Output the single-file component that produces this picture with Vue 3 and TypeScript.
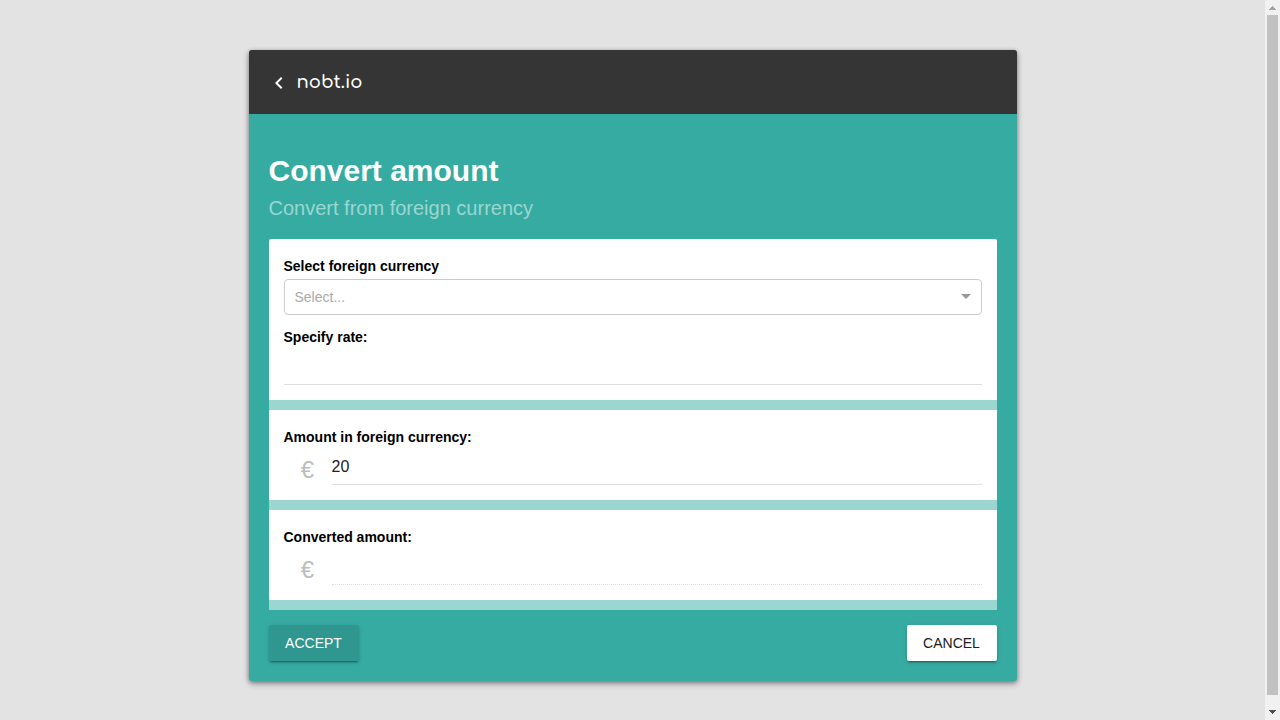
<script setup lang="ts">
import { ref } from 'vue'

const currencies: string[] = ['CHF', 'GBP', 'JPY', 'USD']
const currency = ref('')
const rate = ref('')
const amount = ref('20')
const converted = ref('')
</script>

<template>
  <div class="window">
    <div class="viewport">
      <main class="panel">
        <header class="bar">
          <button class="back" type="button" aria-label="Back">
            <svg width="24" height="24" viewBox="0 0 24 24" aria-hidden="true">
              <path d="M15.41 7.41L14 6l-6 6 6 6 1.41-1.41L10.83 12z" fill="currentColor" />
            </svg>
          </button>
          <a class="brand" href="#">nobt.io</a>
        </header>

        <form class="content" @submit.prevent>
          <h1 class="title">Convert amount</h1>
          <p class="subtitle">Convert from foreign currency</p>

          <div class="sections">
            <section class="section">
              <label class="label" for="currency">Select foreign currency</label>
              <div class="select-wrap">
                <select id="currency" v-model="currency" class="select" :class="{ empty: !currency }">
                  <option value="">Select...</option>
                  <option v-for="c in currencies" :key="c" :value="c">{{ c }}</option>
                </select>
                <span class="caret"></span>
              </div>
              <label class="label spaced" for="rate">Specify rate:</label>
              <input id="rate" v-model="rate" class="input" type="text" />
            </section>

            <section class="section">
              <label class="label" for="amount">Amount in foreign currency:</label>
              <div class="row">
                <span class="symbol">€</span>
                <input id="amount" v-model="amount" class="input" type="text" />
              </div>
            </section>

            <section class="section">
              <label class="label" for="converted">Converted amount:</label>
              <div class="row">
                <span class="symbol">€</span>
                <input id="converted" v-model="converted" class="input" type="text" disabled />
              </div>
            </section>
          </div>

          <div class="actions">
            <button class="button accept" type="submit">ACCEPT</button>
            <button class="button cancel" type="button">CANCEL</button>
          </div>
        </form>
      </main>
    </div>

    <div class="scrollbar" aria-hidden="true">
      <svg class="arrow" width="15" height="15" viewBox="0 0 15 15" shape-rendering="crispEdges">
        <path d="M7 6h1v1h1v1h1v1h1v1H4V9h1V8h1V7h1z" fill="#a3a3a3" />
      </svg>
      <div class="track">
        <div class="thumb"></div>
      </div>
      <svg class="arrow" width="15" height="15" viewBox="0 0 15 15" shape-rendering="crispEdges">
        <path d="M4 5h7v1h-1v1H9v1H8v1H7V8H6V7H5V6H4z" fill="#505050" />
      </svg>
    </div>
  </div>
</template>

<style>
body {
  background: #e3e3e3;
}
</style>

<style scoped>
.window {
  display: flex;
  height: 100vh;
}

.viewport {
  flex: 1;
  min-width: 0;
  overflow-y: auto;
  scrollbar-width: none;
}

.scrollbar {
  display: flex;
  flex-direction: column;
  width: 15px;
  background: #f1f1f1;
}

.arrow {
  display: block;
}

.track {
  flex: 1;
  padding: 0 2px;
}

.thumb {
  height: 98.5%;
  background: #c1c1c1;
}

.panel {
  max-width: 768px;
  margin: 50px auto;
  border-radius: 3px;
  overflow: hidden;
  background: #36aba2;
  box-shadow: 0 3px 6px rgba(0, 0, 0, 0.3), 0 1px 4px rgba(0, 0, 0, 0.3);
  font-family: "Liberation Sans", Arial, sans-serif;
}

.bar {
  display: flex;
  align-items: center;
  height: 64px;
  padding: 0 18px;
  background: #353535;
  color: #fff;
}

.back {
  display: flex;
  margin: 2px 6px 0 0;
  padding: 0;
  border: 0;
  background: none;
  color: inherit;
}

.brand {
  color: inherit;
  font-family: Comfortaa, Lato, sans-serif;
  font-size: 18px;
  font-weight: 600;
  text-decoration: none;
}

.content {
  padding: 40px 20px 20px;
}

.title {
  margin: 0;
  color: #fff;
  font-size: 30px;
  line-height: 34px;
}

.subtitle {
  margin: 8px 0 19px;
  color: #9bd6d1;
  font-size: 20px;
  line-height: 24px;
}

.sections {
  border-radius: 2px;
  overflow: hidden;
}

.section {
  padding: 15px;
  background: #fff;
  border-bottom: 10px solid #9bd6d1;
}

.label {
  display: block;
  color: #000;
  font-size: 14px;
  font-weight: bold;
  line-height: 25px;
}

.spaced {
  margin-top: 10px;
}

.select-wrap {
  position: relative;
}

.select {
  display: block;
  width: 100%;
  height: 36px;
  padding: 0 10px;
  border: 1px solid #ccc;
  border-radius: 4px;
  appearance: none;
  background: #fff;
  color: #333;
  font: inherit;
  font-size: 14px;
}

.select.empty {
  color: #aaa;
}

.caret {
  position: absolute;
  top: 15px;
  right: 11px;
  border: 5px solid transparent;
  border-top-color: #999;
  border-bottom-width: 0;
  pointer-events: none;
}

.row {
  display: flex;
}

.symbol {
  flex: 0 0 48px;
  color: #bdbdbd;
  font-size: 24px;
  line-height: 40px;
  height: 35px;
  text-align: center;
}

.input {
  display: block;
  box-sizing: border-box;
  width: 100%;
  min-width: 0;
  height: 35px;
  padding: 0;
  border: 0;
  border-bottom: 1px solid #dedede;
  border-radius: 0;
  outline: 0;
  background: none;
  color: #212121;
  font: inherit;
  font-size: 16px;
}

.input:disabled {
  border-bottom-style: dotted;
}

.actions {
  display: flex;
  justify-content: space-between;
  margin-top: 15px;
}

.button {
  min-width: 90px;
  height: 36px;
  padding: 0 16px;
  border: 0;
  border-radius: 2px;
  box-shadow: 0 2px 2px rgba(0, 0, 0, 0.14), 0 3px 1px -2px rgba(0, 0, 0, 0.2), 0 1px 5px rgba(0, 0, 0, 0.12);
  font: inherit;
  font-size: 14px;
}

.accept {
  background: #2f978f;
  color: #fff;
}

.cancel {
  background: #fff;
  color: #212121;
}
</style>
